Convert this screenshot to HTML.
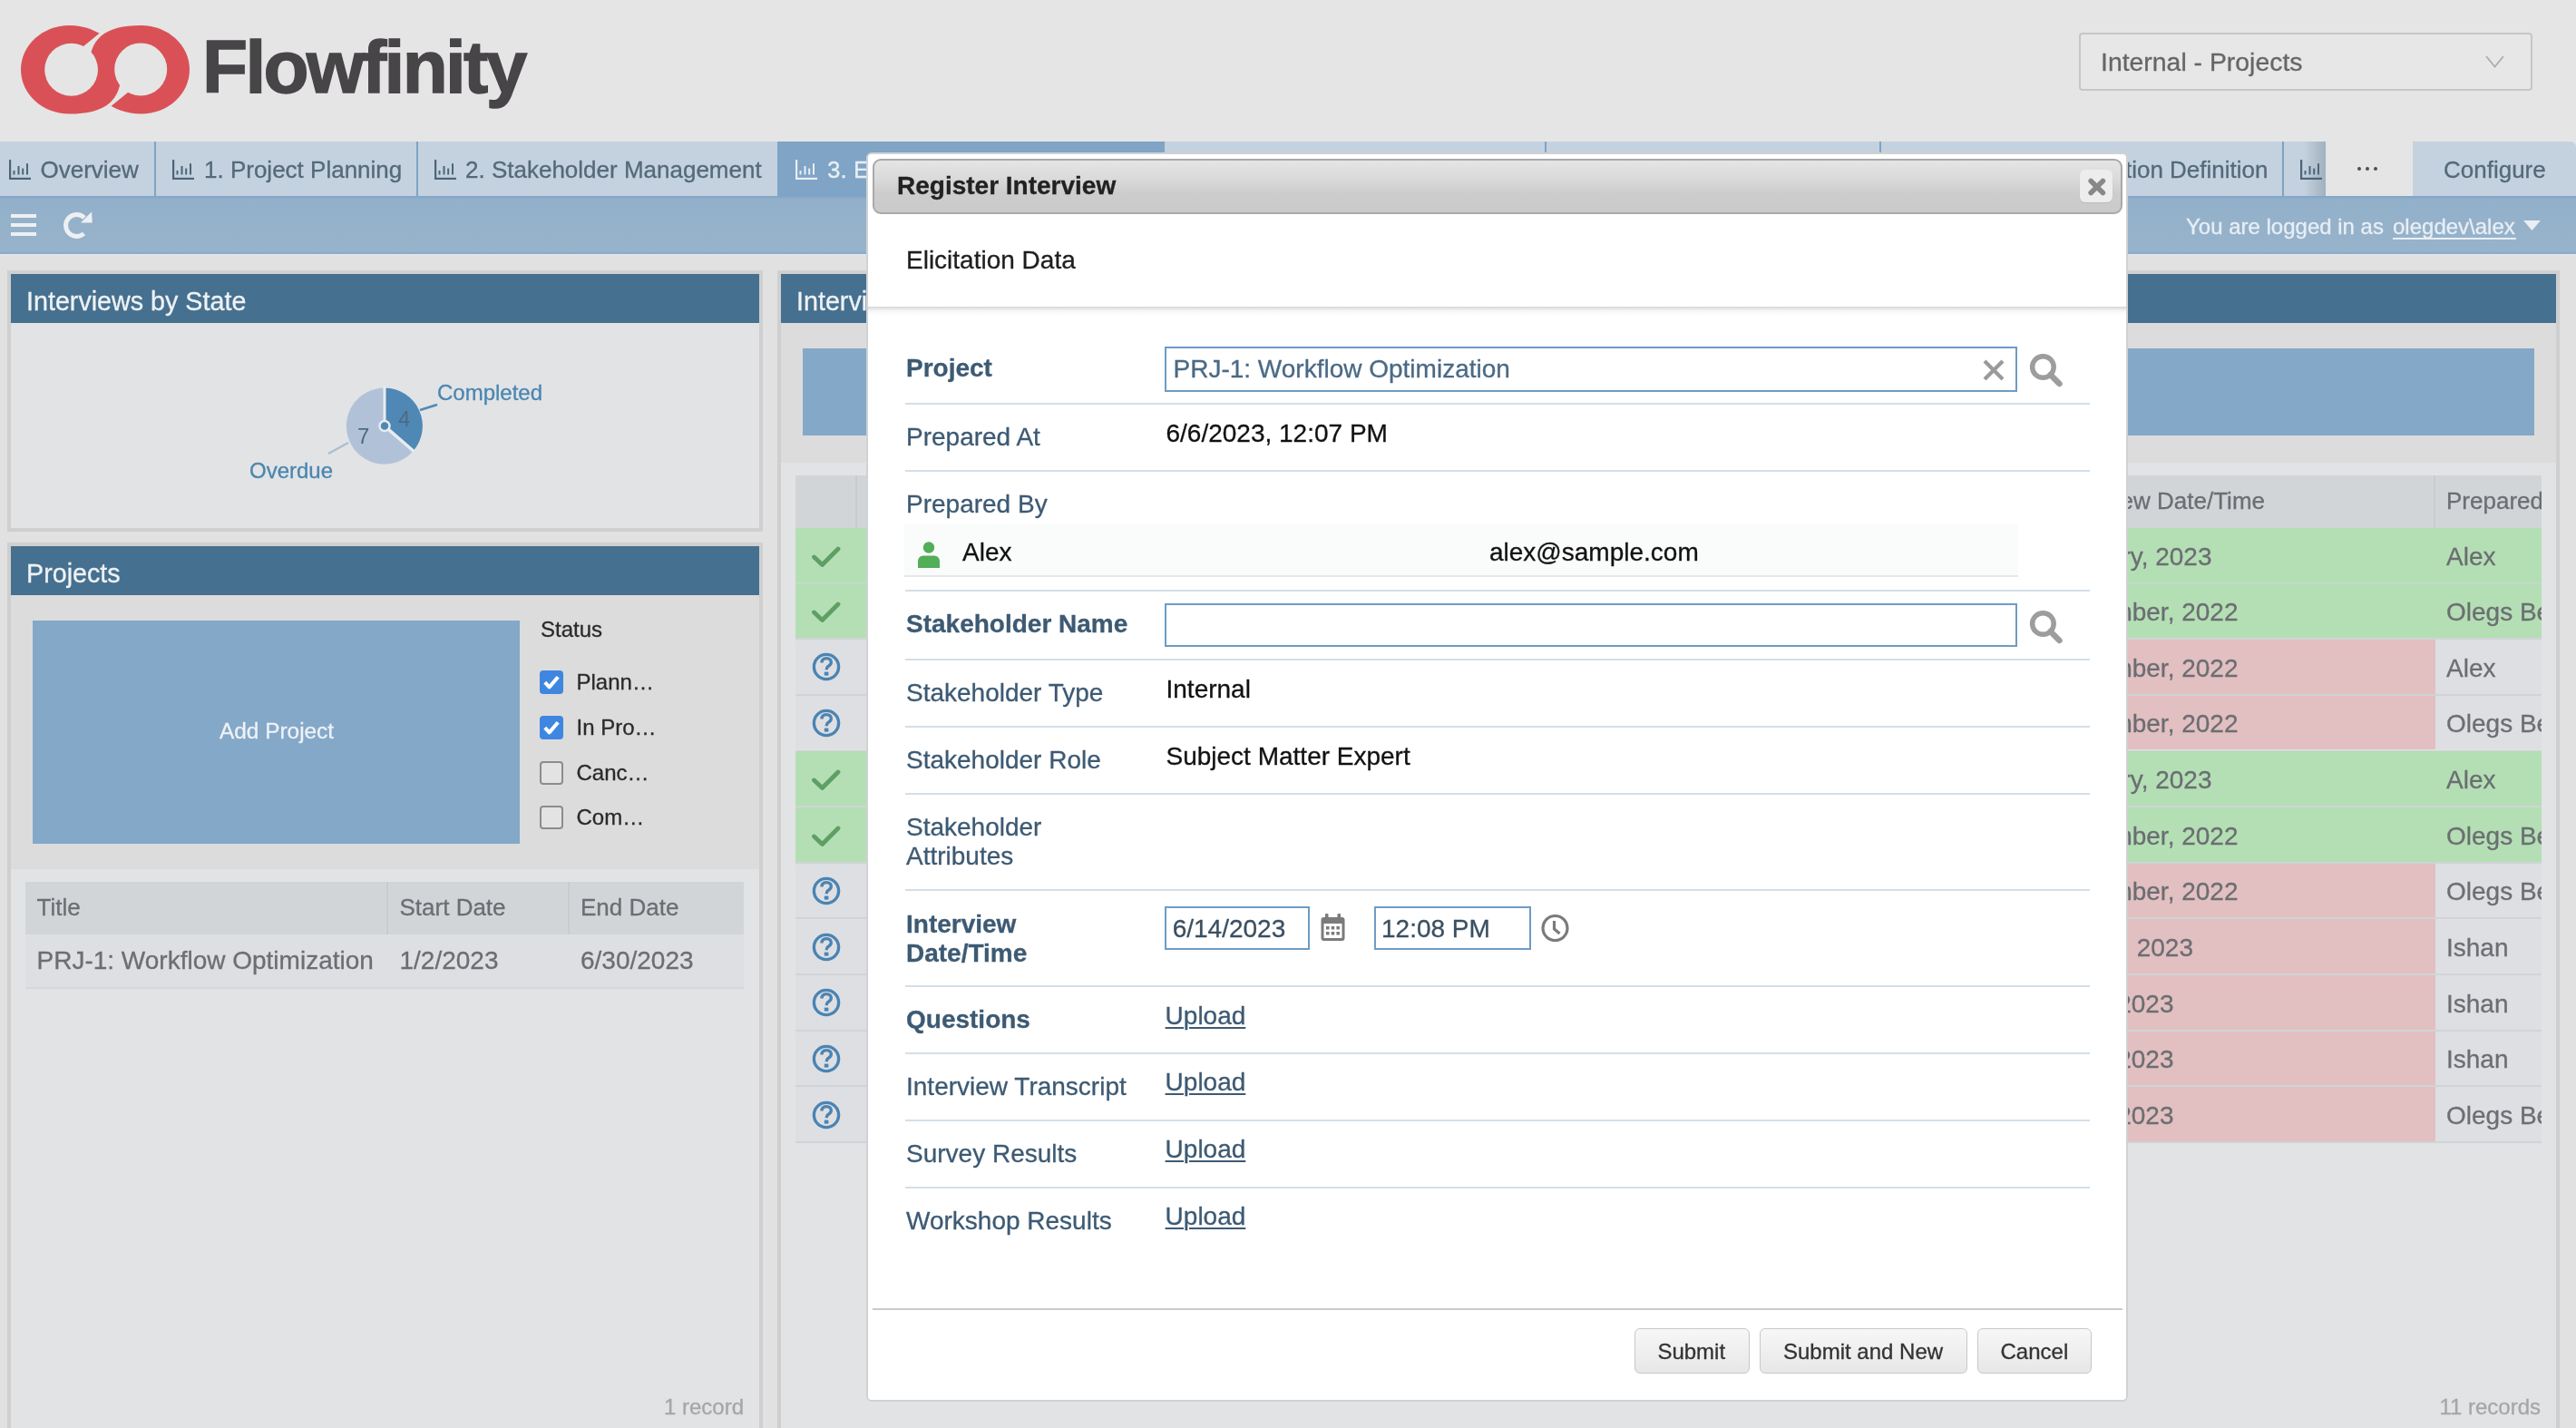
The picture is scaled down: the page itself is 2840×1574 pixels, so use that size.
<!DOCTYPE html>
<html><head><meta charset="utf-8">
<style>
*{box-sizing:border-box;margin:0;padding:0}
html,body{width:2840px;height:1574px;overflow:hidden;background:#e5e5e5;font-family:"Liberation Sans",sans-serif}
.a{position:absolute}
.t{position:absolute;white-space:nowrap;line-height:1;-webkit-text-stroke:0.3px currentColor}
#root{position:relative;width:2840px;height:1574px;overflow:hidden;will-change:transform}
</style></head><body><div id="root">

<!-- HEADER -->
<div class="a" style="left:0;top:0;width:2840px;height:156px;background:#e5e5e5"></div>
<svg class="a" style="left:0;top:0" width="230" height="150" viewBox="0 0 230 150">
  <defs>
    <clipPath id="cl"><path clip-rule="evenodd" d="M-10,-10 H240 V160 H-10 Z M76.1,63.9 L139.9,11.9 L240,11.9 L240,63.9 Z"/></clipPath>
    <clipPath id="cr"><path clip-rule="evenodd" d="M-10,-10 H240 V160 H-10 Z M155.9,89.7 L92.1,141.7 L-8,141.7 L-8,89.7 Z"/></clipPath>
  </defs>
  <path d="M23,76.8 C23,103.75 46.95,125.6 76.5,125.6 C116.75,125.6 134,110.96 134,76.8 C134,49.85 108.26,28 76.5,28 C46.95,28 23,49.85 23,76.8 Z" fill="#d95156" clip-path="url(#cl)"/>
  <path d="M209,76.8 C209,49.85 185.05,28 155.5,28 C115.25,28 98,42.64 98,76.8 C98,103.75 123.74,125.6 155.5,125.6 C185.05,125.6 209,103.75 209,76.8 Z" fill="#d95156" clip-path="url(#cr)"/>
  <ellipse cx="78.6" cy="76.8" rx="29.4" ry="29" fill="#e5e5e5"/>
  <circle cx="155.2" cy="76.4" r="29" fill="#e5e5e5"/>
</svg>
<div class="t" style="left:223px;top:33px;font-size:82px;font-weight:700;letter-spacing:-2.7px;color:#474548;-webkit-text-stroke:1.4px #474548">Flowfinity</div>

<div class="a" style="left:2292px;top:36px;width:500px;height:64px;border:2px solid #c6c6c6;border-radius:4px;background:#e7e7e7"></div>
<div class="t" style="left:2316px;top:53.8px;font-size:28.4px;color:#666">Internal - Projects</div>
<svg class="a" style="left:2738px;top:60px" width="24" height="17"><path d="M3,2 L12.5,13.5 L22,2" fill="none" stroke="#adadad" stroke-width="1.8"/></svg>


<!-- TAB BAR -->
<div class="a" style="left:0;top:156px;width:2564px;height:60px;background:#c3d2de"></div>
<div class="a" style="left:2660px;top:156px;width:180px;height:60px;background:#c3d2de;border-top-right-radius:6px"></div>
<div class="a" style="left:857px;top:156px;width:427px;height:60px;background:#7fa4c6"></div>
<div class="a" style="left:170px;top:156px;width:2px;height:60px;background:#7fa3c5"></div>
<div class="a" style="left:458.5px;top:156px;width:2px;height:60px;background:#7fa3c5"></div>
<div class="a" style="left:1703px;top:156px;width:2px;height:60px;background:#7fa3c5"></div>
<div class="a" style="left:2072px;top:156px;width:2px;height:60px;background:#7fa3c5"></div>
<div class="a" style="left:2516px;top:156px;width:2px;height:60px;background:#7fa3c5"></div>
<div class="a" style="left:2540px;top:156px;width:24px;height:60px;background:linear-gradient(90deg,rgba(150,165,178,0),rgba(150,165,178,.75))"></div>
<svg class="a" style="left:10px;top:176px" width="26" height="23"><g fill="#4d6579"><rect x="0" y="0" width="2.2" height="22"/><rect x="0" y="19.8" width="24" height="2.2"/><rect x="4.5" y="12" width="2" height="4.5"/><rect x="9.5" y="7" width="2" height="9.5"/><rect x="14.2" y="9.6" width="2" height="6.9"/><rect x="19" y="4.2" width="2" height="12.3"/></g></svg>
<div class="t" style="left:44.5px;top:174px;font-size:26px;color:#55697a">Overview</div>
<svg class="a" style="left:190px;top:176px" width="26" height="23"><g fill="#4d6579"><rect x="0" y="0" width="2.2" height="22"/><rect x="0" y="19.8" width="24" height="2.2"/><rect x="4.5" y="12" width="2" height="4.5"/><rect x="9.5" y="7" width="2" height="9.5"/><rect x="14.2" y="9.6" width="2" height="6.9"/><rect x="19" y="4.2" width="2" height="12.3"/></g></svg>
<div class="t" style="left:225px;top:174px;font-size:26px;color:#55697a">1. Project Planning</div>
<svg class="a" style="left:479px;top:176px" width="26" height="23"><g fill="#4d6579"><rect x="0" y="0" width="2.2" height="22"/><rect x="0" y="19.8" width="24" height="2.2"/><rect x="4.5" y="12" width="2" height="4.5"/><rect x="9.5" y="7" width="2" height="9.5"/><rect x="14.2" y="9.6" width="2" height="6.9"/><rect x="19" y="4.2" width="2" height="12.3"/></g></svg>
<div class="t" style="left:513px;top:174px;font-size:26px;color:#55697a">2. Stakeholder Management</div>
<svg class="a" style="left:877px;top:176px" width="26" height="23"><g fill="#e9eef3"><rect x="0" y="0" width="2.2" height="22"/><rect x="0" y="19.8" width="24" height="2.2"/><rect x="4.5" y="12" width="2" height="4.5"/><rect x="9.5" y="7" width="2" height="9.5"/><rect x="14.2" y="9.6" width="2" height="6.9"/><rect x="19" y="4.2" width="2" height="12.3"/></g></svg>
<div class="t" style="left:912px;top:174px;font-size:26px;color:#e9eef3">3. Elicitation</div>
<div class="t" style="left:2262px;top:174px;font-size:26px;color:#55697a">6. Solution Definition</div>
<svg class="a" style="left:2536px;top:176px" width="26" height="23"><g fill="#4d6579"><rect x="0" y="0" width="2.2" height="22"/><rect x="0" y="19.8" width="24" height="2.2"/><rect x="4.5" y="12" width="2" height="4.5"/><rect x="9.5" y="7" width="2" height="9.5"/><rect x="14.2" y="9.6" width="2" height="6.9"/><rect x="19" y="4.2" width="2" height="12.3"/></g></svg>
<div class="a" style="left:2599px;top:184px;width:3.6px;height:3.6px;border-radius:2px;background:#4d4d4d"></div>
<div class="a" style="left:2608px;top:184px;width:3.6px;height:3.6px;border-radius:2px;background:#4d4d4d"></div>
<div class="a" style="left:2617px;top:184px;width:3.6px;height:3.6px;border-radius:2px;background:#4d4d4d"></div>
<div class="t" style="left:2694px;top:174px;font-size:26px;color:#55697a">Configure</div>

<!-- TOOLBAR -->
<div class="a" style="left:0;top:215.5px;width:2840px;height:64px;background:linear-gradient(180deg,#80a4c5 0,#93b0ca 4px,#97b3cb 94%,#8eaac3 100%)"></div>
<div class="a" style="left:12px;top:236px;width:28px;height:4px;background:#edf0f2"></div>
<div class="a" style="left:12px;top:246px;width:28px;height:4px;background:#edf0f2"></div>
<div class="a" style="left:12px;top:256px;width:28px;height:4px;background:#edf0f2"></div>
<svg class="a" style="left:68px;top:230px" width="36" height="36"><path d="M 24.5,27.5 A 12,12 0 1 1 25,10" fill="none" stroke="#edf0f2" stroke-width="5"/><path d="M 21,15.5 L 33.8,15.5 L 33,3.5 Z" fill="#edf0f2"/></svg>
<div class="t" style="left:2410px;top:238px;font-size:24px;color:#e8eef4">You are logged in as</div>
<div class="t" style="left:2638px;top:238px;font-size:24px;color:#e8eef4">olegdev\alex</div>
<div class="a" style="left:2638px;top:262px;width:136px;height:2px;background:#e8eef4"></div>
<svg class="a" style="left:2782px;top:243px" width="20" height="12"><path d="M0,0 L19,0 L9.5,11 Z" fill="#e8eef4"/></svg>


<!-- CONTENT BG -->
<div class="a" style="left:0;top:279.5px;width:2840px;height:1294.5px;background:#e1e1e1"></div>
<div class="a" style="left:0;top:279.5px;width:2840px;height:2px;background:#dfe5ea"></div>

<!-- PANEL L1 -->
<div class="a" style="left:8px;top:298px;width:833px;height:288px;background:#e2e3e5;border:4px solid #cfcfcf;border-top-color:#d2d0ce"></div>
<div class="a" style="left:12px;top:302px;width:825px;height:54px;background:#46708f"></div>
<div class="t" style="left:29px;top:317.5px;font-size:28.7px;color:#eef2f5">Interviews by State</div>
<svg class="a" style="left:260px;top:400px" width="360" height="200">
  <path d="M164,69.6 L164,27.6 A42,42 0 0 1 195.7,97 Z" fill="#4f88b5"/>
  <path d="M164,69.6 L195.7,97 A42,42 0 1 1 164,27.6 Z" fill="#b1c2d8"/>
  <line x1="164" y1="69.6" x2="164" y2="26" stroke="#e8ecf0" stroke-width="3"/>
  <line x1="164" y1="69.6" x2="196.5" y2="97.8" stroke="#e8ecf0" stroke-width="3.5"/>
  <circle cx="164" cy="69.6" r="5.5" fill="#4f88b5" stroke="#e8ecf0" stroke-width="2.5"/>
  <line x1="203" y1="52" x2="222" y2="46" stroke="#4f88b5" stroke-width="2.5"/>
  <line x1="124" y1="88" x2="102" y2="100" stroke="#a9bfd1" stroke-width="2.5"/>
  <text x="179" y="70" font-family="Liberation Sans" font-size="24" fill="#4d6a84">4</text>
  <text x="134" y="89" font-family="Liberation Sans" font-size="24" fill="#4d6a84">7</text>
</svg>
<div class="t" style="left:482px;top:421px;font-size:24px;color:#4a86b0">Completed</div>
<div class="t" style="left:275px;top:507px;font-size:24px;color:#4a86b0">Overdue</div>

<!-- PANEL L2 -->
<div class="a" style="left:8px;top:598px;width:833px;height:1000px;background:#e2e3e5;border:4px solid #cfcfcf;border-top-color:#d2d0ce"></div>
<div class="a" style="left:12px;top:602px;width:825px;height:54px;background:#46708f"></div>
<div class="t" style="left:29px;top:617.5px;font-size:28.7px;color:#eef2f5">Projects</div>
<div class="a" style="left:12px;top:656px;width:825px;height:301.5px;background:#dcdcdc"></div>
<div class="a" style="left:36px;top:684px;width:536.5px;height:245.5px;background:#84a8c8"></div>
<div class="t" style="left:242px;top:794px;font-size:24.4px;color:#eef2f6">Add Project</div>
<div class="t" style="left:596px;top:682px;font-size:24px;color:#2a2a2a">Status</div>
<div class="a" style="left:595px;top:739px;width:26px;height:26px;border-radius:4px;background:#3f86e0"></div>
<svg class="a" style="left:595px;top:739px" width="26" height="26"><path d="M5.8,13.2 L10.6,18.4 L20.2,7.2" fill="none" stroke="#fff" stroke-width="4" stroke-linejoin="round"/></svg>
<div class="a" style="left:595px;top:789px;width:26px;height:26px;border-radius:4px;background:#3f86e0"></div>
<svg class="a" style="left:595px;top:789px" width="26" height="26"><path d="M5.8,13.2 L10.6,18.4 L20.2,7.2" fill="none" stroke="#fff" stroke-width="4" stroke-linejoin="round"/></svg>
<div class="a" style="left:595px;top:839px;width:26px;height:26px;border-radius:4px;background:#e3e3e3;border:2px solid #8c8c8c"></div>
<div class="a" style="left:595px;top:888px;width:26px;height:26px;border-radius:4px;background:#e3e3e3;border:2px solid #8c8c8c"></div>
<div class="t" style="left:635.5px;top:740px;font-size:24px;color:#2a2a2a">Plann…</div>
<div class="t" style="left:635.5px;top:790px;font-size:24px;color:#2a2a2a">In Pro…</div>
<div class="t" style="left:635.5px;top:840px;font-size:24px;color:#2a2a2a">Canc…</div>
<div class="t" style="left:635.5px;top:889px;font-size:24px;color:#2a2a2a">Com…</div>
<div class="a" style="left:28px;top:972px;width:792px;height:57.5px;background:#d2d5d8"></div>
<div class="a" style="left:426px;top:972px;width:2px;height:57.5px;background:#c8ccd0"></div>
<div class="a" style="left:625.5px;top:972px;width:2px;height:57.5px;background:#c8ccd0"></div>
<div class="t" style="left:40.5px;top:987px;font-size:26px;color:#6b6e72">Title</div>
<div class="t" style="left:440.5px;top:987px;font-size:26px;color:#6b6e72">Start Date</div>
<div class="t" style="left:640px;top:987px;font-size:26px;color:#6b6e72">End Date</div>
<div class="a" style="left:28px;top:1029.5px;width:792px;height:58px;background:#dedfe2"></div>
<div class="a" style="left:28px;top:1087.5px;width:792px;height:2px;background:#d5d8db"></div>
<div class="t" style="left:40.5px;top:1045.3px;font-size:28px;color:#6b6e72">PRJ-1: Workflow Optimization</div>
<div class="t" style="left:440.5px;top:1045.3px;font-size:28px;color:#6b6e72">1/2/2023</div>
<div class="t" style="left:640px;top:1045.3px;font-size:28px;color:#6b6e72">6/30/2023</div>
<div class="t" style="left:732px;top:1539px;font-size:24px;color:#a5a6a8">1 record</div>

<!-- PANEL R -->
<div class="a" style="left:857px;top:298px;width:1965px;height:1300px;background:#e2e3e5;border:4px solid #cfcfcf;border-top-color:#d2d0ce"></div>
<div class="a" style="left:861px;top:302px;width:1957px;height:54px;background:#46708f"></div>
<div class="t" style="left:878px;top:317.5px;font-size:28.7px;color:#eef2f5">Interviews</div>
<div class="a" style="left:861px;top:356px;width:1957px;height:154px;background:#dcdcdc"></div>
<div class="a" style="left:885px;top:384px;width:1908.5px;height:95.5px;background:#84a8c8"></div>
<div class="a" style="left:877px;top:524px;width:1924.5px;height:57.7px;background:#d2d5d8"></div>
<div class="a" style="left:943px;top:524px;width:2px;height:57.7px;background:#c8ccd0"></div>
<div class="a" style="left:2683px;top:524px;width:2px;height:57.7px;background:#c8ccd0"></div>
<div class="t" style="right:343px;top:539.3px;font-size:26px;color:#6b6e72">Interview Date/Time</div>

<div class="a" style="left:877px;top:581.70px;width:1924.5px;height:59.85px;background:#b4dfb4"></div><svg class="a" style="left:893px;top:601.70px" width="36" height="28"><path d="M4.5,12 L13.5,20.5 L31,3" fill="none" stroke="#5f9f64" stroke-width="4.8" stroke-linecap="round" stroke-linejoin="round"/></svg><div class="a" style="left:877px;top:641.55px;width:1924.5px;height:1.8px;background:#d0d4d7"></div>
<div class="a" style="left:877px;top:643.35px;width:1924.5px;height:59.85px;background:#b4dfb4"></div><svg class="a" style="left:893px;top:663.35px" width="36" height="28"><path d="M4.5,12 L13.5,20.5 L31,3" fill="none" stroke="#5f9f64" stroke-width="4.8" stroke-linecap="round" stroke-linejoin="round"/></svg><div class="a" style="left:877px;top:703.20px;width:1924.5px;height:1.8px;background:#d0d4d7"></div>
<div class="a" style="left:877px;top:705.00px;width:1924.5px;height:59.85px;background:#dedfe2"></div><div class="a" style="left:2345px;top:705.00px;width:340px;height:59.85px;background:#e2bfc1"></div><svg class="a" style="left:893px;top:717.30px" width="36" height="36"><circle cx="18" cy="18" r="13.6" fill="none" stroke="#4a84b3" stroke-width="3.4"/><path d="M13,13.5 C13,10 15.3,8.6 18.2,8.6 C21.3,8.6 23.3,10.5 23.3,13 C23.3,15.6 21.4,16.4 19.8,17.6 C18.6,18.5 18.2,19.2 18.2,21.2" fill="none" stroke="#4a84b3" stroke-width="3.4"/><rect x="15.8" y="23.6" width="4.6" height="4" fill="#4a84b3"/></svg><div class="a" style="left:877px;top:764.85px;width:1924.5px;height:1.8px;background:#d0d4d7"></div>
<div class="a" style="left:877px;top:766.65px;width:1924.5px;height:59.85px;background:#dedfe2"></div><div class="a" style="left:2345px;top:766.65px;width:340px;height:59.85px;background:#e2bfc1"></div><svg class="a" style="left:893px;top:778.95px" width="36" height="36"><circle cx="18" cy="18" r="13.6" fill="none" stroke="#4a84b3" stroke-width="3.4"/><path d="M13,13.5 C13,10 15.3,8.6 18.2,8.6 C21.3,8.6 23.3,10.5 23.3,13 C23.3,15.6 21.4,16.4 19.8,17.6 C18.6,18.5 18.2,19.2 18.2,21.2" fill="none" stroke="#4a84b3" stroke-width="3.4"/><rect x="15.8" y="23.6" width="4.6" height="4" fill="#4a84b3"/></svg><div class="a" style="left:877px;top:826.50px;width:1924.5px;height:1.8px;background:#d0d4d7"></div>
<div class="a" style="left:877px;top:828.30px;width:1924.5px;height:59.85px;background:#b4dfb4"></div><svg class="a" style="left:893px;top:848.30px" width="36" height="28"><path d="M4.5,12 L13.5,20.5 L31,3" fill="none" stroke="#5f9f64" stroke-width="4.8" stroke-linecap="round" stroke-linejoin="round"/></svg><div class="a" style="left:877px;top:888.15px;width:1924.5px;height:1.8px;background:#d0d4d7"></div>
<div class="a" style="left:877px;top:889.95px;width:1924.5px;height:59.85px;background:#b4dfb4"></div><svg class="a" style="left:893px;top:909.95px" width="36" height="28"><path d="M4.5,12 L13.5,20.5 L31,3" fill="none" stroke="#5f9f64" stroke-width="4.8" stroke-linecap="round" stroke-linejoin="round"/></svg><div class="a" style="left:877px;top:949.80px;width:1924.5px;height:1.8px;background:#d0d4d7"></div>
<div class="a" style="left:877px;top:951.60px;width:1924.5px;height:59.85px;background:#dedfe2"></div><div class="a" style="left:2345px;top:951.60px;width:340px;height:59.85px;background:#e2bfc1"></div><svg class="a" style="left:893px;top:963.90px" width="36" height="36"><circle cx="18" cy="18" r="13.6" fill="none" stroke="#4a84b3" stroke-width="3.4"/><path d="M13,13.5 C13,10 15.3,8.6 18.2,8.6 C21.3,8.6 23.3,10.5 23.3,13 C23.3,15.6 21.4,16.4 19.8,17.6 C18.6,18.5 18.2,19.2 18.2,21.2" fill="none" stroke="#4a84b3" stroke-width="3.4"/><rect x="15.8" y="23.6" width="4.6" height="4" fill="#4a84b3"/></svg><div class="a" style="left:877px;top:1011.45px;width:1924.5px;height:1.8px;background:#d0d4d7"></div>
<div class="a" style="left:877px;top:1013.25px;width:1924.5px;height:59.85px;background:#dedfe2"></div><div class="a" style="left:2345px;top:1013.25px;width:340px;height:59.85px;background:#e2bfc1"></div><svg class="a" style="left:893px;top:1025.55px" width="36" height="36"><circle cx="18" cy="18" r="13.6" fill="none" stroke="#4a84b3" stroke-width="3.4"/><path d="M13,13.5 C13,10 15.3,8.6 18.2,8.6 C21.3,8.6 23.3,10.5 23.3,13 C23.3,15.6 21.4,16.4 19.8,17.6 C18.6,18.5 18.2,19.2 18.2,21.2" fill="none" stroke="#4a84b3" stroke-width="3.4"/><rect x="15.8" y="23.6" width="4.6" height="4" fill="#4a84b3"/></svg><div class="a" style="left:877px;top:1073.10px;width:1924.5px;height:1.8px;background:#d0d4d7"></div>
<div class="a" style="left:877px;top:1074.90px;width:1924.5px;height:59.85px;background:#dedfe2"></div><div class="a" style="left:2345px;top:1074.90px;width:340px;height:59.85px;background:#e2bfc1"></div><svg class="a" style="left:893px;top:1087.20px" width="36" height="36"><circle cx="18" cy="18" r="13.6" fill="none" stroke="#4a84b3" stroke-width="3.4"/><path d="M13,13.5 C13,10 15.3,8.6 18.2,8.6 C21.3,8.6 23.3,10.5 23.3,13 C23.3,15.6 21.4,16.4 19.8,17.6 C18.6,18.5 18.2,19.2 18.2,21.2" fill="none" stroke="#4a84b3" stroke-width="3.4"/><rect x="15.8" y="23.6" width="4.6" height="4" fill="#4a84b3"/></svg><div class="a" style="left:877px;top:1134.75px;width:1924.5px;height:1.8px;background:#d0d4d7"></div>
<div class="a" style="left:877px;top:1136.55px;width:1924.5px;height:59.85px;background:#dedfe2"></div><div class="a" style="left:2345px;top:1136.55px;width:340px;height:59.85px;background:#e2bfc1"></div><svg class="a" style="left:893px;top:1148.85px" width="36" height="36"><circle cx="18" cy="18" r="13.6" fill="none" stroke="#4a84b3" stroke-width="3.4"/><path d="M13,13.5 C13,10 15.3,8.6 18.2,8.6 C21.3,8.6 23.3,10.5 23.3,13 C23.3,15.6 21.4,16.4 19.8,17.6 C18.6,18.5 18.2,19.2 18.2,21.2" fill="none" stroke="#4a84b3" stroke-width="3.4"/><rect x="15.8" y="23.6" width="4.6" height="4" fill="#4a84b3"/></svg><div class="a" style="left:877px;top:1196.40px;width:1924.5px;height:1.8px;background:#d0d4d7"></div>
<div class="a" style="left:877px;top:1198.20px;width:1924.5px;height:59.85px;background:#dedfe2"></div><div class="a" style="left:2345px;top:1198.20px;width:340px;height:59.85px;background:#e2bfc1"></div><svg class="a" style="left:893px;top:1210.50px" width="36" height="36"><circle cx="18" cy="18" r="13.6" fill="none" stroke="#4a84b3" stroke-width="3.4"/><path d="M13,13.5 C13,10 15.3,8.6 18.2,8.6 C21.3,8.6 23.3,10.5 23.3,13 C23.3,15.6 21.4,16.4 19.8,17.6 C18.6,18.5 18.2,19.2 18.2,21.2" fill="none" stroke="#4a84b3" stroke-width="3.4"/><rect x="15.8" y="23.6" width="4.6" height="4" fill="#4a84b3"/></svg><div class="a" style="left:877px;top:1258.05px;width:1924.5px;height:1.8px;background:#d0d4d7"></div>
<div class="t" style="right:401.5px;top:599.50px;font-size:28px;color:#6b6e72">January, 2023</div><div class="t" style="right:372.5px;top:661.15px;font-size:28px;color:#6b6e72">December, 2022</div><div class="t" style="right:372.5px;top:722.80px;font-size:28px;color:#6b6e72">December, 2022</div><div class="t" style="right:372.5px;top:784.45px;font-size:28px;color:#6b6e72">December, 2022</div><div class="t" style="right:401.5px;top:846.10px;font-size:28px;color:#6b6e72">January, 2023</div><div class="t" style="right:372.5px;top:907.75px;font-size:28px;color:#6b6e72">December, 2022</div><div class="t" style="right:372.5px;top:969.40px;font-size:28px;color:#6b6e72">December, 2022</div><div class="t" style="right:422.0px;top:1031.05px;font-size:28px;color:#6b6e72">June 1, 2023</div><div class="t" style="right:443.5px;top:1092.70px;font-size:28px;color:#6b6e72">6/1/2023</div><div class="t" style="right:443.5px;top:1154.35px;font-size:28px;color:#6b6e72">6/1/2023</div><div class="t" style="right:443.5px;top:1216.00px;font-size:28px;color:#6b6e72">6/1/2023</div><div class="a" style="left:2685px;top:524px;width:116.5px;height:760px;overflow:hidden"><div class="t" style="left:12px;top:15.3px;font-size:26px;color:#6b6e72">Prepared By</div><div class="t" style="left:12px;top:75.50px;font-size:28px;color:#6b6e72">Alex</div><div class="t" style="left:12px;top:137.15px;font-size:28px;color:#6b6e72">Olegs Berzins</div><div class="t" style="left:12px;top:198.80px;font-size:28px;color:#6b6e72">Alex</div><div class="t" style="left:12px;top:260.45px;font-size:28px;color:#6b6e72">Olegs Berzins</div><div class="t" style="left:12px;top:322.10px;font-size:28px;color:#6b6e72">Alex</div><div class="t" style="left:12px;top:383.75px;font-size:28px;color:#6b6e72">Olegs Berzins</div><div class="t" style="left:12px;top:445.40px;font-size:28px;color:#6b6e72">Olegs Berzins</div><div class="t" style="left:12px;top:507.05px;font-size:28px;color:#6b6e72">Ishan</div><div class="t" style="left:12px;top:568.70px;font-size:28px;color:#6b6e72">Ishan</div><div class="t" style="left:12px;top:630.35px;font-size:28px;color:#6b6e72">Ishan</div><div class="t" style="left:12px;top:692.00px;font-size:28px;color:#6b6e72">Olegs Berzins</div></div>
<div class="t" style="left:2689.4px;top:1539px;font-size:24px;color:#a5a6a8">11 records</div>


<!-- MODAL -->
<div class="a" style="left:955px;top:168px;width:1391px;height:1377px;background:#fff;border-radius:6px;border:2px solid #cfd2d4"></div>
<div class="a" style="left:962px;top:175px;width:1378px;height:61px;border:2px solid #a9a9a9;border-radius:9px;background:linear-gradient(180deg,#e5e5e5 0%,#dadada 35%,#cdcdcd 62%,#cacaca 100%)"></div>
<div class="t" style="left:989px;top:191.3px;font-size:28px;font-weight:700;color:#222;">Register Interview</div>
<div class="a" style="left:2293px;top:187px;width:36px;height:36px;border-radius:6px;background:#ededed;box-shadow:0 1px 1px rgba(0,0,0,.08)"></div>
<svg class="a" style="left:2293px;top:187px" width="36" height="36"><path d="M12.2,12.5 L25.4,25.5 M25.4,12.5 L12.2,25.5" stroke="#888" stroke-width="5.6" stroke-linecap="round"/></svg>
<div class="t" style="left:999px;top:273.3px;font-size:28px;font-weight:400;color:#1e1e1e;">Elicitation Data</div>
<div class="a" style="left:957px;top:337.5px;width:1387px;height:10px;background:linear-gradient(180deg,#d4d4d4 0,#e6e6e6 2px,#f4f4f4 4.5px,#fbfbfb 7px,#fff 10px)"></div>
<div class="t" style="left:999px;top:392.3px;font-size:28px;font-weight:700;color:#3d5a73;">Project</div>
<div class="a" style="left:1284px;top:382px;width:940px;height:50px;border:2px solid #6d9cc4;background:#fff"></div>
<div class="t" style="left:1293.5px;top:393.3px;font-size:28px;font-weight:400;color:#4a6a85;">PRJ-1: Workflow Optimization</div>
<svg class="a" style="left:2185px;top:395px" width="26" height="26"><path d="M3,3 L23,23 M23,3 L3,23" stroke="#9a9a9c" stroke-width="4.2"/></svg>
<svg class="a" style="left:2234px;top:390px" width="44" height="40"><circle cx="18.4" cy="14.5" r="11.8" fill="none" stroke="#9d9d9d" stroke-width="5.5"/><path d="M26.5,23 L36.5,33" stroke="#9d9d9d" stroke-width="6.5" stroke-linecap="round"/></svg>
<div class="a" style="left:998px;top:444px;width:1306px;height:2px;background:#d3dfe9"></div>
<div class="t" style="left:999px;top:468.3px;font-size:28px;font-weight:400;color:#3d5a73;">Prepared At</div>
<div class="t" style="left:1285.5px;top:464.3px;font-size:28px;font-weight:400;color:#111;">6/6/2023, 12:07 PM</div>
<div class="a" style="left:998px;top:518px;width:1306px;height:2px;background:#d3dfe9"></div>
<div class="t" style="left:999px;top:542.3px;font-size:28px;font-weight:400;color:#3d5a73;">Prepared By</div>
<div class="a" style="left:997px;top:577.5px;width:1228px;height:58.5px;background:#fafbfb;border-bottom:2px solid #e7e7e7"></div>
<svg class="a" style="left:1011px;top:597px" width="26" height="30"><circle cx="13" cy="6.5" r="6.2" fill="#52ae58"/><path d="M1,29 L1,22 C1,17.5 4,15.5 8,15.5 L18,15.5 C22,15.5 25,17.5 25,22 L25,29 Z" fill="#52ae58"/></svg>
<div class="t" style="left:1061px;top:595.3px;font-size:28px;font-weight:400;color:#111;">Alex</div>
<div class="t" style="left:1642px;top:595.3px;font-size:28px;font-weight:400;color:#111;">alex@sample.com</div>
<div class="a" style="left:998px;top:650px;width:1306px;height:2px;background:#d3dfe9"></div>
<div class="t" style="left:999px;top:674.3px;font-size:28px;font-weight:700;color:#3d5a73;">Stakeholder Name</div>
<div class="a" style="left:1284px;top:664.5px;width:940px;height:48.5px;border:2px solid #6d9cc4;background:#fff"></div>
<svg class="a" style="left:2234px;top:672.5px" width="44" height="40"><circle cx="18.4" cy="14.5" r="11.8" fill="none" stroke="#9d9d9d" stroke-width="5.5"/><path d="M26.5,23 L36.5,33" stroke="#9d9d9d" stroke-width="6.5" stroke-linecap="round"/></svg>
<div class="a" style="left:998px;top:726px;width:1306px;height:2px;background:#d3dfe9"></div>
<div class="t" style="left:999px;top:750.3px;font-size:28px;font-weight:400;color:#3d5a73;">Stakeholder Type</div>
<div class="t" style="left:1285.5px;top:746.3px;font-size:28px;font-weight:400;color:#111;">Internal</div>
<div class="a" style="left:998px;top:800px;width:1306px;height:2px;background:#d3dfe9"></div>
<div class="t" style="left:999px;top:824.3px;font-size:28px;font-weight:400;color:#3d5a73;">Stakeholder Role</div>
<div class="t" style="left:1285.5px;top:820.0px;font-size:28px;font-weight:400;color:#111;">Subject Matter Expert</div>
<div class="a" style="left:998px;top:874px;width:1306px;height:2px;background:#d3dfe9"></div>
<div class="t" style="left:999px;top:898.3px;font-size:28px;font-weight:400;color:#3d5a73;">Stakeholder</div>
<div class="t" style="left:999px;top:930.0px;font-size:28px;font-weight:400;color:#3d5a73;">Attributes</div>
<div class="a" style="left:998px;top:980px;width:1306px;height:2px;background:#d3dfe9"></div>
<div class="t" style="left:999px;top:1004.7px;font-size:28px;font-weight:700;color:#3d5a73;">Interview</div>
<div class="t" style="left:999px;top:1036.9px;font-size:28px;font-weight:700;color:#3d5a73;">Date/Time</div>
<div class="a" style="left:1284px;top:998.7px;width:160px;height:48.3px;border:2px solid #6d9cc4;background:#fff"></div>
<div class="t" style="left:1292.7px;top:1009.7px;font-size:28px;font-weight:400;color:#3a4f61;">6/14/2023</div>
<svg class="a" style="left:1455px;top:1006px" width="30" height="33"><rect x="1.5" y="5" width="26" height="26" rx="3" fill="#7b7b7b"/><rect x="4.5" y="12" width="20" height="16" fill="#fff"/><rect x="6" y="1" width="3.5" height="7" rx="1" fill="#7b7b7b"/><rect x="19.5" y="1" width="3.5" height="7" rx="1" fill="#7b7b7b"/><g fill="#7b7b7b"><rect x="7" y="15" width="3.5" height="3.5"/><rect x="12.7" y="15" width="3.5" height="3.5"/><rect x="18.4" y="15" width="3.5" height="3.5"/><rect x="7" y="21" width="3.5" height="3.5"/><rect x="12.7" y="21" width="3.5" height="3.5"/><rect x="18.4" y="21" width="3.5" height="3.5"/></g></svg>
<div class="a" style="left:1514.6px;top:998.7px;width:173px;height:48.3px;border:2px solid #6d9cc4;background:#fff"></div>
<div class="t" style="left:1523px;top:1009.7px;font-size:28px;font-weight:400;color:#3a4f61;">12:08 PM</div>
<svg class="a" style="left:1697px;top:1006px" width="36" height="36"><circle cx="17.5" cy="17" r="13.5" fill="none" stroke="#7b7b7b" stroke-width="3.2"/><path d="M16.5,9 L16.5,18 L22.5,23" fill="none" stroke="#7b7b7b" stroke-width="3.2"/></svg>
<div class="a" style="left:998px;top:1086px;width:1306px;height:2px;background:#d3dfe9"></div>
<div class="t" style="left:999px;top:1110.3px;font-size:28px;font-weight:700;color:#3d5a73;">Questions</div>
<div class="t" style="left:1284.6px;top:1105.7px;font-size:28px;font-weight:400;color:#3d5a73;text-decoration:underline;text-decoration-thickness:2px;text-underline-offset:3px">Upload</div>
<div class="a" style="left:998px;top:1160px;width:1306px;height:2px;background:#d3dfe9"></div>
<div class="t" style="left:999px;top:1184.3px;font-size:28px;font-weight:400;color:#3d5a73;">Interview Transcript</div>
<div class="t" style="left:1284.6px;top:1179.1px;font-size:28px;font-weight:400;color:#3d5a73;text-decoration:underline;text-decoration-thickness:2px;text-underline-offset:3px">Upload</div>
<div class="a" style="left:998px;top:1234px;width:1306px;height:2px;background:#d3dfe9"></div>
<div class="t" style="left:999px;top:1258.1px;font-size:28px;font-weight:400;color:#3d5a73;">Survey Results</div>
<div class="t" style="left:1284.6px;top:1253.3px;font-size:28px;font-weight:400;color:#3d5a73;text-decoration:underline;text-decoration-thickness:2px;text-underline-offset:3px">Upload</div>
<div class="a" style="left:998px;top:1308px;width:1306px;height:2px;background:#d3dfe9"></div>
<div class="t" style="left:999px;top:1332.1px;font-size:28px;font-weight:400;color:#3d5a73;">Workshop Results</div>
<div class="t" style="left:1284.6px;top:1327.3px;font-size:28px;font-weight:400;color:#3d5a73;text-decoration:underline;text-decoration-thickness:2px;text-underline-offset:3px">Upload</div>
<div class="a" style="left:962px;top:1442px;width:1378px;height:2px;background:#cbcbcb"></div>
<div class="a" style="left:1802px;top:1464px;width:127px;height:50px;border:1.5px solid #c8c8c8;border-radius:6px;background:linear-gradient(180deg,#f7f7f7,#e7e7e7)"></div>
<div class="t" style="left:1827.4px;top:1477.7px;font-size:24px;font-weight:400;color:#333;">Submit</div>
<div class="a" style="left:1940px;top:1464px;width:229px;height:50px;border:1.5px solid #c8c8c8;border-radius:6px;background:linear-gradient(180deg,#f7f7f7,#e7e7e7)"></div>
<div class="t" style="left:1966px;top:1477.7px;font-size:24px;font-weight:400;color:#333;">Submit and New</div>
<div class="a" style="left:2180px;top:1464px;width:126px;height:50px;border:1.5px solid #c8c8c8;border-radius:6px;background:linear-gradient(180deg,#f7f7f7,#e7e7e7)"></div>
<div class="t" style="left:2205.5px;top:1477.7px;font-size:24px;font-weight:400;color:#333;">Cancel</div>

</div></body></html>
